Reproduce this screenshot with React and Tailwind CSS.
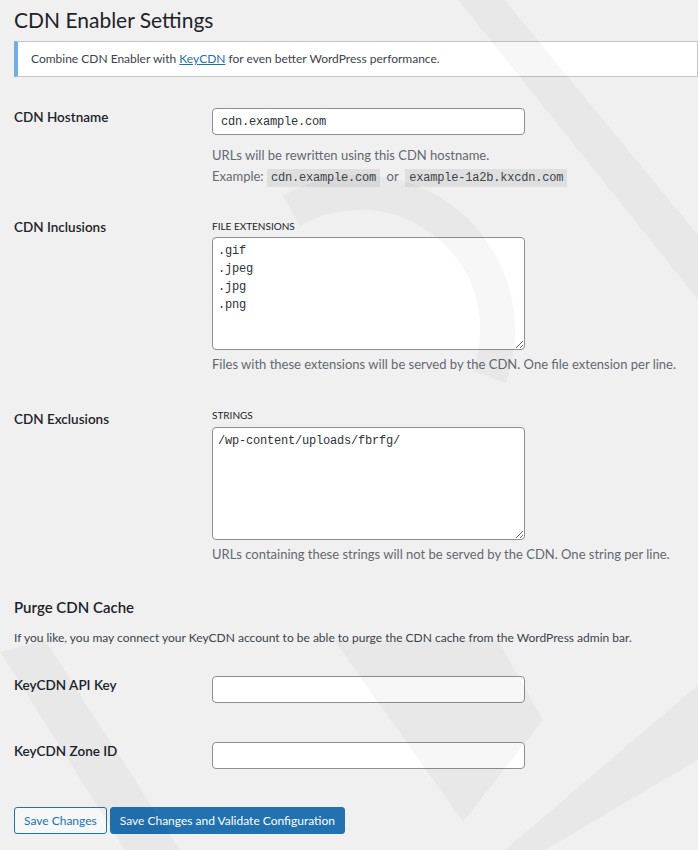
import { useState } from "react";

const mono = "font-['Liberation_Mono','DejaVu_Sans_Mono',monospace] text-[12px] tracking-[-0.2px]";

function Row({ label, children, className = "" }) {
  return (
    <div className={"flex " + className}>
      <div className="w-[198px] shrink-0 text-[13.5px] font-semibold leading-[18px] text-[#1d2327]">
        {label}
      </div>
      <div className="flex-1">{children}</div>
    </div>
  );
}

function Code({ children }) {
  return (
    <code className={mono + " bg-black/[0.07] px-[4px] py-[2px] text-[#3c434a]"}>
      {children}
    </code>
  );
}

export default function App() {
  const [host, setHost] = useState("cdn.example.com");
  const [incl, setIncl] = useState(".gif\n.jpeg\n.jpg\n.png");
  const [excl, setExcl] = useState("/wp-content/uploads/fbrfg/");

  const inputCls =
    "w-[313px] h-[27px] rounded-[4px] border border-[#8c8f94] bg-white px-[8px] text-[#2c3338] outline-none " + mono;
  const areaCls =
    "block w-[313px] h-[113px] rounded-[4px] border border-[#8c8f94] bg-white px-[5px] pt-[4px] leading-[18px] text-[#2c3338] outline-none " + mono;

  return (
    <div className="relative min-h-[850px] overflow-hidden bg-[#f0f0f1] font-['Lato','Noto_Sans',sans-serif] text-[12px] text-[#3c434a]">
      <div className="pl-[14px] pt-[5px]">
        <h1 className="text-[21px] leading-[30px] text-[#1d2327]">CDN Enabler Settings</h1>

        {/* notice */}
        <div className="mt-[6px] flex h-[36px] items-center border border-l-4 border-[#c3c4c7] border-l-[#72aee6] bg-white pl-[13px]">
          <p>
            Combine CDN Enabler with{" "}
            <a href="#" className="text-[#2271b1] underline">KeyCDN</a> for even better WordPress performance.
          </p>
        </div>

        <Row label="CDN Hostname" className="mt-[31px]">
          <input className={inputCls} value={host} onChange={(e) => setHost(e.target.value)} />
          <p className="mt-[10px] text-[13px] leading-[21px] text-[#646970]">URLs will be rewritten using this CDN hostname.</p>
          <p className="text-[13px] leading-[21px] text-[#646970]">
            Example: <Code>cdn.example.com</Code>&nbsp; or &nbsp;<Code>example-1a2b.kxcdn.com</Code>
          </p>
        </Row>

        <Row label="CDN Inclusions" className="mt-[29px]">
          <div className="mt-[1px] text-[10px] uppercase leading-[14px] text-[#1d2327]">File Extensions</div>
          <textarea className={"mt-[4px] " + areaCls} value={incl} onChange={(e) => setIncl(e.target.value)} />
          <p className="mt-[4px] text-[13px] leading-[20px] text-[#646970]">
            Files with these extensions will be served by the CDN. One file extension per line.
          </p>
        </Row>

        <Row label={<div className="pt-[2px]">CDN Exclusions</div>} className="mt-[34px]">
          <div className="text-[10px] uppercase leading-[14px] text-[#1d2327]">Strings</div>
          <textarea className={"mt-[5px] " + areaCls} value={excl} onChange={(e) => setExcl(e.target.value)} />
          <p className="mt-[4px] text-[13px] leading-[20px] text-[#646970]">
            URLs containing these strings will not be served by the CDN. One string per line.
          </p>
        </Row>

        <h2 className="mt-[33px] text-[15px] font-semibold leading-[20px] text-[#1d2327]">Purge CDN Cache</h2>
        <p className="mt-[11px] leading-[20px]">
          If you like, you may connect your KeyCDN account to be able to purge the CDN cache from the WordPress admin bar.
        </p>

        <Row label="KeyCDN API Key" className="mt-[28px]">
          <input className={inputCls} defaultValue="" />
        </Row>
        <Row label="KeyCDN Zone ID" className="mt-[39px]">
          <input className={inputCls} defaultValue="" />
        </Row>

        <div className="mt-[38px] flex gap-[3px]">
          <button className="h-[27px] rounded-[3px] border border-[#2271b1] bg-[#f6f7f7] px-[9px] text-[#2271b1]">
            Save Changes
          </button>
          <button className="h-[27px] rounded-[3px] border border-[#2271b1] bg-[#2271b1] px-[9px] text-white">
            Save Changes and Validate Configuration
          </button>
        </div>
      </div>

      {/* faint logo watermark */}
      <svg className="pointer-events-none absolute inset-0 h-[850px] w-[698px]" viewBox="0 0 698 850">
        <g fill="#000" fillOpacity="0.03">
          <polygon points="458,0 505,0 698,235 698,300" />
          <polygon points="334,640 498,640 543,720 463,822" />
          <polygon points="0,652 45,640 180,850 125,850" />
          <polygon points="698,685 698,760 545,850 505,850" />
          <path d="M282.5 195.8 A155 155 0 0 1 505.7 383 L472.8 371 A120 120 0 0 0 300 226 Z" />
        </g>
      </svg>
    </div>
  );
}
